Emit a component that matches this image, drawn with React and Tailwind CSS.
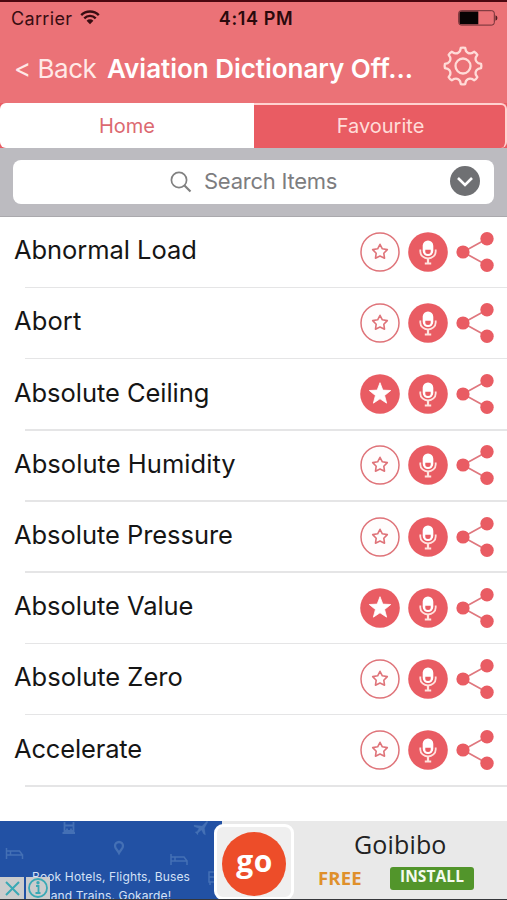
import React from "react";

const entries = [
  { term: "Abnormal Load", tracking: "tracking-[-0.05px]" },
  { term: "Abort", tracking: "tracking-[0.1px]" },
  { term: "Absolute Ceiling", favourite: true, tracking: "tracking-[-0.05px]" },
  { term: "Absolute Humidity", tracking: "tracking-[0.05px]" },
  { term: "Absolute Pressure", tracking: "tracking-[-0.05px]" },
  { term: "Absolute Value", favourite: true, tracking: "tracking-[-0.05px]" },
  { term: "Absolute Zero", tracking: "tracking-[0px]" },
  { term: "Accelerate", tracking: "tracking-[-0.15px]" },
];

const polar = (r, deg) => {
  const a = ((deg - 90) * Math.PI) / 180;
  return `${(20 + r * Math.cos(a)).toFixed(2)} ${(20 + r * Math.sin(a)).toFixed(2)}`;
};

const gearPath =
  Array.from({ length: 8 }, (_, i) => {
    const c = i * 45;
    return `${i ? "L" : "M"}${polar(15.4, c - 11)} L${polar(18.2, c - 7)} Q${polar(18.7, c)} ${polar(18.2, c + 7)} L${polar(15.4, c + 11)} Q${polar(12.8, c + 22.5)} ${polar(15.4, c + 34)}`;
  }).join(" ") + "Z";

const starPoints = (outer, inner) =>
  Array.from({ length: 10 }, (_, i) => polar(i % 2 ? inner : outer, i * 36)).join(" ");

function Gear() {
  return (
    <svg className="mb-1 size-10" viewBox="0 0 40 40" fill="none" stroke="#ffdcd8" strokeWidth="2.3" strokeLinejoin="round">
      <path d={gearPath} />
      <circle cx="20" cy="20" r="7.5" />
    </svg>
  );
}

function Star({ filled }) {
  return (
    <svg className="size-10" viewBox="0 0 40 40">
      <circle cx="20" cy="20" r={filled ? 19.8 : 19} fill={filled ? "#e95c63" : "#fffdfd"} stroke={filled ? "none" : "#df7379"} strokeWidth="1.5" />
      {filled ? (
        <polygon points={starPoints(11.3, 4.8)} fill="#fff" stroke="#fff" strokeWidth=".8" strokeLinejoin="round" />
      ) : (
        <polygon points={starPoints(7.7, 4)} fill="none" stroke="#df7379" strokeWidth="1.6" strokeLinejoin="round" />
      )}
    </svg>
  );
}

function Mic() {
  return (
    <svg className="size-10" viewBox="0 0 40 40" fill="none">
      <circle cx="20" cy="20" r="19.8" fill="#e95c63" />
      <rect x="14.7" y="8.5" width="10.6" height="15.5" rx="5.2" fill="#fff" />
      <path d="M17.3 17.7h5.4v1.8a2.7 2.5 0 0 1-5.4 0z" fill="#e95c63" />
      <path d="M12.3 17.5v2a7.7 7 0 0 0 15.4 0v-2" stroke="#ffe3df" strokeWidth="1.8" />
      <path d="M20 26.5v5M16.8 31.5h6.4" stroke="#ffe3df" strokeWidth="2.2" />
    </svg>
  );
}

function Share() {
  return (
    <svg className="h-10 w-[38px]" viewBox="0 0 38 40">
      <path d="M31 6.8L7 20l24 13.2" fill="none" stroke="#df777e" strokeWidth="1.7" />
      <circle cx="7" cy="20" r="6.6" fill="#e95c63" />
      <circle cx="31" cy="6.8" r="6.7" fill="#e95c63" />
      <circle cx="31" cy="33.2" r="6.7" fill="#e95c63" />
    </svg>
  );
}

function StatusBar() {
  return (
    <div className="grid h-[33px] grid-cols-3 items-center pl-[11px] pr-[9px] text-[#380d12]">
      <div className="flex items-center gap-[8px]">
        <span className="text-[18px] tracking-[0.35px]">Carrier</span>
        <svg className="mb-[2px] h-[15px] w-5" viewBox="0 0 20 15" fill="none" stroke="currentColor" strokeWidth="2.4">
          <path d="M1.2 5.2a12.4 12.4 0 0 1 17.6 0M4.3 8.3a8 8 0 0 1 11.4 0" />
          <path d="M6.6 10.7a4.8 4.8 0 0 1 6.8 0L10 14.2z" fill="currentColor" stroke="none" />
        </svg>
      </div>
      <div className="pl-[3px] text-center text-[18px] font-semibold whitespace-nowrap tracking-[0.6px] text-[#2a090c]">4:14 PM</div>
      <svg className="-mt-[2px] h-4 w-10 justify-self-end" viewBox="0 0 40 16">
        <rect x=".7" y=".7" width="35.6" height="14.4" rx="2.5" fill="none" stroke="#6d3035" strokeWidth="1" />
        <path d="M3 1.5h17.3v12.8H3A1.5 1.5 0 0 1 1.5 12.8V3A1.5 1.5 0 0 1 3 1.5z" fill="#080304" />
        <path d="M37.5 5.2a3 3 0 0 1 0 5.6z" fill="#4d1d21" />
      </svg>
    </div>
  );
}

function AdBackdrop() {
  return (
    <svg className="absolute inset-0 h-full w-full" viewBox="0 0 222 78" fill="none" stroke="#4470b5" strokeWidth="1.5">
      <path d="M6.5 27v11M6.5 30h4v4M6.5 34h16v4M10.5 30h9l3 4M171 33v11M171 36h4v4M171 40h16v4M175 36h9l3 4" />
      <path d="M64.500 1v9h9V1M64.500 4.500h9M62.500 12h12.500M67 7.500v1.500M71 7.500v1.500" strokeWidth="1.800" />
      <path d="M119 32c-1.5-3-4-4.3-4-7a4 4 0 0 1 8 0c0 2.7-2.5 4-4 7z" strokeWidth="2.3" />
      <path d="M194 4l8 1 5-5 1 1-3.5 6 1 7-2-1-2-4-3.5 3v2l-3-3 2-.5 2-3-5-2z" fill="#4470b5" strokeWidth=".2" />
      <path d="M209 51h8v10h-8zM209 56h8M210 61v3M216 61v3" />
    </svg>
  );
}

function AdBanner() {
  return (
    <div className="flex h-[79px] overflow-hidden border-b border-[#35363a] bg-[#e9e9e9]">
      <div className="relative w-[222px] shrink-0 bg-[#2251a4]">
        <AdBackdrop />
        <p className="relative pt-[46px] text-center text-[12px] leading-[19px] tracking-[0.15px] text-[#d4e1f6]">
          Book Hotels, Flights, Buses
          <br />
          and Trains. Gokarde!
        </p>
        <div className="absolute bottom-0 left-0 flex h-[22px] gap-[2px]">
          <svg className="h-[22px] w-6 bg-[#cbcccd]" viewBox="0 0 24 22" fill="none" stroke="#3aa9b5" strokeWidth="2">
            <path d="M6 5l13 13M19 5L6 18" />
          </svg>
          <svg className="h-[22px] w-6 bg-[#cbcccd]" viewBox="0 0 24 22" fill="none" stroke="#3aa9b5" strokeWidth="1.8">
            <circle cx="12" cy="11" r="9" />
            <path d="M10 9h2.5v7M9.5 16h5" />
            <circle cx="12" cy="5.8" r=".8" fill="#3aa9b5" />
          </svg>
        </div>
      </div>
      <div className="relative z-10 -ml-2 mt-[3px] h-[76px] w-20 shrink-0 rounded-[9px] border-[3px] border-white bg-[#efefef] pl-[5px] pt-[5px]">
        <div className="flex size-[64px] items-center justify-center rounded-full bg-[#ed4d29] pb-[7px] pl-[1px] font-['Open_Sans',sans-serif] text-[30px] leading-none font-bold tracking-[0.5px] text-white">go</div>
      </div>
      <div className="min-w-0 flex-1 font-['Open_Sans',sans-serif]">
        <div className="pt-[6px] pl-[60px] text-[25px] leading-[34px] tracking-[0.15px] text-[#222]">Goibibo</div>
        <div className="flex items-center pl-[24px] pt-[5px]">
          <span className="w-[72px] text-[18.5px] leading-6 font-bold tracking-[0.2px] text-[#df902b]">FREE</span>
          <span className="flex h-[23px] w-[84px] items-center justify-center rounded-[3px] bg-[#52952b] pb-[2px] text-[15.5px] font-bold tracking-[0.1px] text-[#f4faef]">INSTALL</span>
        </div>
      </div>
    </div>
  );
}

export default function App() {
  return (
    <div className="flex h-[900px] w-[507px] flex-col overflow-hidden bg-white font-[Inter,sans-serif]">
      <header className="h-[103px] shrink-0 border-t-2 border-[#4b0710] bg-[#eb7277]">
        <StatusBar />
        <div className="flex h-[66px] items-center pl-[14px] text-[26px] whitespace-nowrap text-white">
          <span className="w-[93px] tracking-[-0.5px] text-[#ffe9e7]">&lt; Back</span>
          <h1 className="w-[336px] text-[26px] font-semibold tracking-[-0.03px]">Aviation Dictionary Off...</h1>
          <Gear />
        </div>
      </header>
      <nav className="flex h-[45px] shrink-0 bg-[#e95c63] text-[20px]">
        <div className="flex w-[254px] items-center justify-center rounded-l-[6px] bg-white text-[#dc6970]">Home</div>
        <div className="flex flex-1 items-center justify-center rounded-r-[6px] border-t-2 border-r-2 border-[#ffd2d0] pb-[2px] pl-[2px] text-[#ffdcd9]">Favourite</div>
      </nav>
      <div className="flex h-[69px] shrink-0 items-start border-b border-[#aaa9ad] bg-[#bcbbc0] px-[13px] pt-3">
        <div className="flex h-[44px] w-[481px] items-center rounded-[8px] bg-white pl-[157px] pr-[14px]">
          <svg className="size-[22px]" viewBox="0 0 22 22" fill="none" stroke="#818181" strokeWidth="1.7">
            <circle cx="9" cy="9" r="7.6" />
            <path d="M14.5 14.5l6 6" strokeWidth="2.2" />
          </svg>
          <span className="ml-3 flex-1 pb-[2px] text-[22px] tracking-[-0.25px] text-[#7d7d80]">Search Items</span>
          <svg className="mb-[2px] size-[30px]" viewBox="0 0 30 30">
            <circle cx="15" cy="15" r="15" fill="#6f7073" />
            <path d="M8 12l7 7 7-7" fill="none" stroke="white" strokeWidth="2.6" />
          </svg>
        </div>
      </div>
      <main className="min-h-0 flex-1">
        {entries.map(({ term, favourite, tracking }) => (
          <div key={term} className="h-[71.2px]">
            <div className="flex h-[69.7px] items-center pl-[14px] pr-[13px]">
              <span className={`flex-1 pb-[3px] text-[25.5px] text-[#151515] ${tracking}`}>{term}</span>
              <div className="flex items-center gap-[8.5px]">
                <div className="flex items-center gap-[7.5px]">
                  <Star filled={favourite} />
                  <Mic />
                </div>
                <Share />
              </div>
            </div>
            <div className="ml-[25px] h-[1.5px] bg-[#e5e5e6]" />
          </div>
        ))}
      </main>
      <AdBanner />
    </div>
  );
}
